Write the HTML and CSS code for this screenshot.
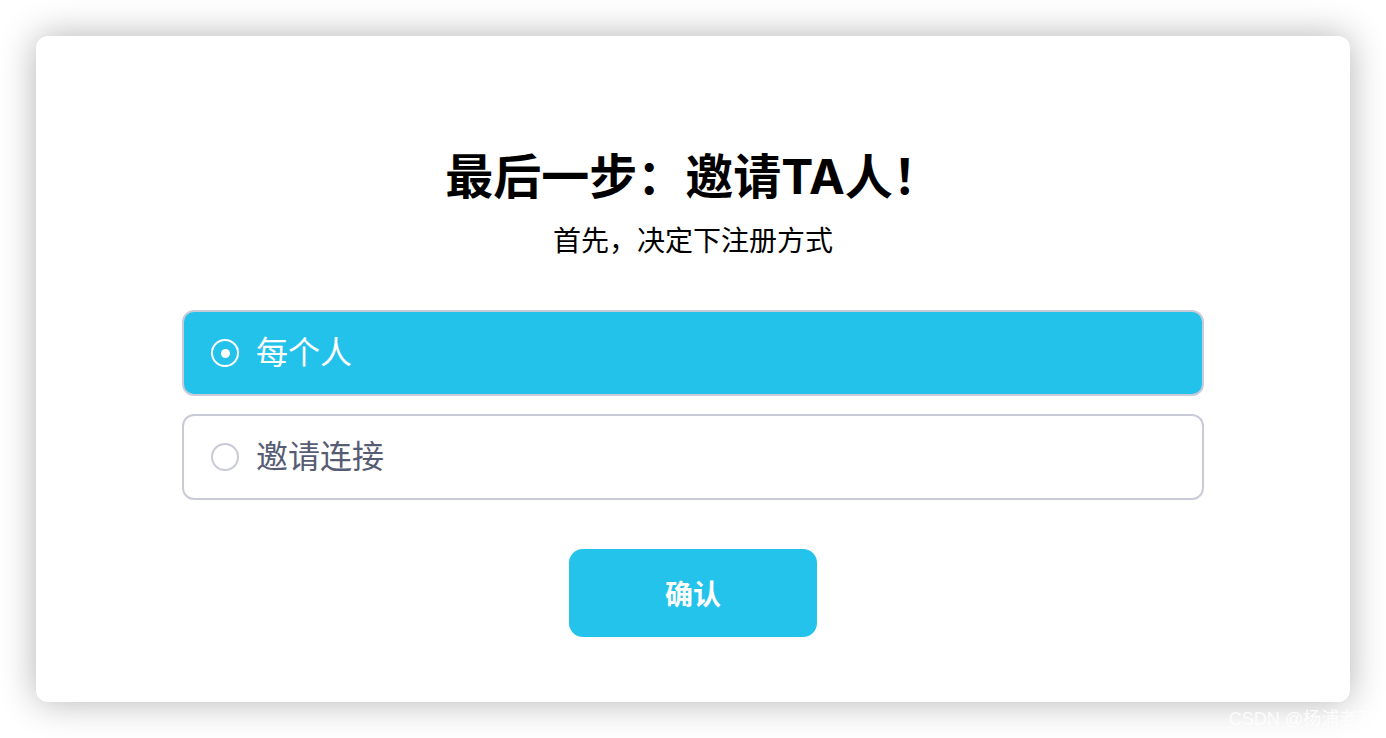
FILE: index.html
```html
<!DOCTYPE html>
<html lang="zh-CN">
<head>
    <meta charset="UTF-8">
    <title>邀请TA人</title>
    <link rel="stylesheet" href="styles.css">
</head>
<body>

<div class="card">
    <h1 class="title">最后一步：邀请TA人！</h1>
    <p class="subtitle">首先，决定下注册方式</p>

    <div class="options">
        <label class="option selected">
            <span class="radio"></span>
            <span class="option-text">每个人</span>
        </label>
        <label class="option">
            <span class="radio"></span>
            <span class="option-text">邀请连接</span>
        </label>
    </div>

    <button class="confirm">确认</button>
</div>

<div class="watermark">CSDN @杨浦老苏</div>

</body>
</html>
```

FILE: styles.css
```css
body {
    margin: 0;
    padding: 36px;
    height: 738px;
    box-sizing: border-box;
    background-color: #ffffff;
    font-family: 'Inter', 'Noto Sans CJK SC', sans-serif;
    position: relative;
    overflow: hidden;
}

.card {
    width: 1314px;
    height: 666px;
    box-sizing: border-box;
    background-color: #fff;
    border-radius: 12px;
    box-shadow: 0 0 36px rgba(0, 0, 0, 0.3);
    padding-top: 113px;
    display: flex;
    flex-direction: column;
    align-items: center;
}

.title {
    margin: 0;
    font-size: 48px;
    line-height: 56px;
    font-weight: 700;
    color: #000;
}

.subtitle {
    margin: 18px 0 0;
    font-size: 28px;
    line-height: 36px;
    color: #000;
}

.options {
    width: 1022px;
    margin-top: 51px;
    display: flex;
    flex-direction: column;
    gap: 18px;
}

.option {
    height: 86px;
    box-sizing: border-box;
    border: 2px solid #cacbd8;
    border-radius: 12px;
    padding-left: 27px;
    display: flex;
    align-items: center;
    gap: 17px;
    color: #575c75;
    background-color: #fff;
}

.option.selected {
    background-color: #23c2ea;
    color: #fff;
}

/* kolko radia */
.radio {
    width: 28px;
    height: 28px;
    box-sizing: border-box;
    border: 2px solid #c8cad6;
    border-radius: 50%;
    display: flex;
    align-items: center;
    justify-content: center;
}

.selected .radio {
    border-color: #fff;
}

.selected .radio::after {
    content: "";
    width: 9px;
    height: 9px;
    border-radius: 50%;
    background-color: #fff;
}

.option-text {
    font-size: 32px;
    line-height: 40px;
}

.confirm {
    margin-top: 49px;
    width: 248px;
    height: 88px;
    border: none;
    border-radius: 14px;
    background-color: #24c3eb;
    color: #fff;
    font-family: inherit;
    font-size: 28px;
    font-weight: 700;
}

.watermark {
    position: absolute;
    right: 11px;
    bottom: 8px;
    font-size: 18px;
    color: rgba(255, 255, 255, 0.85);
    font-family: 'Liberation Sans', 'Noto Sans CJK SC', sans-serif;
}
```
